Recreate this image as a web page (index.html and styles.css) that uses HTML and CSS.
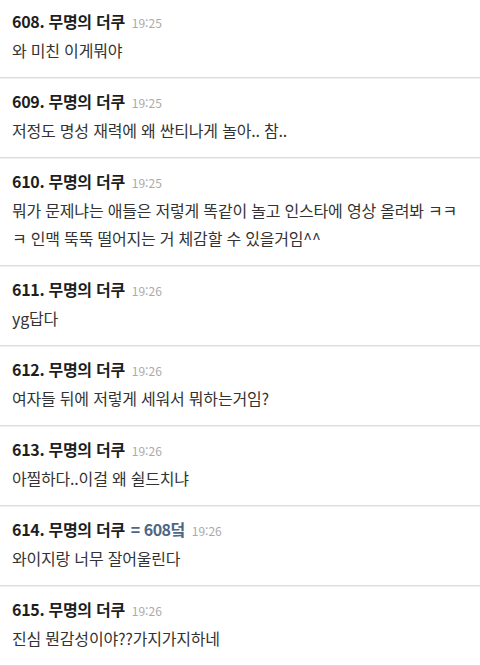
FILE: index.html
```html
<!DOCTYPE html>
<html lang="ko">
<head>
<meta charset="utf-8">
<link rel="stylesheet" href="styles.css">
</head>
<body>
<div class="list">
  <div class="item">
    <div class="head"><span class="name">608. 무명의 더쿠</span><span class="time">19:25</span></div>
    <div class="body">와 미친 이게뭐야</div>
  </div>
  <div class="item">
    <div class="head"><span class="name">609. 무명의 더쿠</span><span class="time">19:25</span></div>
    <div class="body">저정도 명성 재력에 왜 싼티나게 놀아.. 참..</div>
  </div>
  <div class="item">
    <div class="head"><span class="name">610. 무명의 더쿠</span><span class="time">19:25</span></div>
    <div class="body">뭐가 문제냐는 애들은 저렇게 똑같이 놀고 인스타에 영상 올려봐 ㅋㅋ ㅋ 인맥 뚝뚝 떨어지는 거 체감할 수 있을거임^^</div>
  </div>
  <div class="item">
    <div class="head"><span class="name">611. 무명의 더쿠</span><span class="time">19:26</span></div>
    <div class="body">yg답다</div>
  </div>
  <div class="item">
    <div class="head"><span class="name">612. 무명의 더쿠</span><span class="time">19:26</span></div>
    <div class="body">여자들 뒤에 저렇게 세워서 뭐하는거임?</div>
  </div>
  <div class="item">
    <div class="head"><span class="name">613. 무명의 더쿠</span><span class="time">19:26</span></div>
    <div class="body">아찔하다..이걸 왜 쉴드치냐</div>
  </div>
  <div class="item">
    <div class="head"><span class="name">614. 무명의 더쿠</span><span class="ref">= 608덬</span><span class="time">19:26</span></div>
    <div class="body">와이지랑 너무 잘어울린다</div>
  </div>
  <div class="item">
    <div class="head"><span class="name">615. 무명의 더쿠</span><span class="time">19:26</span></div>
    <div class="body">진심 뭔감성이야??가지가지하네</div>
  </div>
</div>
</body>
</html>
```

FILE: styles.css
```css
html, body {
  margin: 0;
  padding: 0;
  background: #fff;
}
body {
  font-family: "Noto Sans CJK KR", "Noto Sans", sans-serif;
  color: #333;
  overflow: hidden;
}
.list {
  margin-top: -2px;
}
.item {
  padding: 11px 12px 13px 12px;
  border-bottom: 1px solid #dcdcdc;
  box-shadow: 0 1px 0 #f0f0f0;
}
.head {
  display: flex;
  align-items: baseline;
  gap: 7px;
  height: 24px;
  line-height: 24px;
  margin-bottom: 3px;
}
.name {
  font-size: 16px;
  font-weight: 700;
  color: #1e1e1e;
  letter-spacing: -0.3px;
}
.ref {
  font-size: 16px;
  font-weight: 700;
  color: #4d6785;
  letter-spacing: -0.5px;
  margin-left: -1px;
}
.time {
  font-size: 12px;
  color: #aaa;
}
.body {
  font-size: 16px;
  line-height: 28px;
  color: #333;
  letter-spacing: -0.2px;
}
```
